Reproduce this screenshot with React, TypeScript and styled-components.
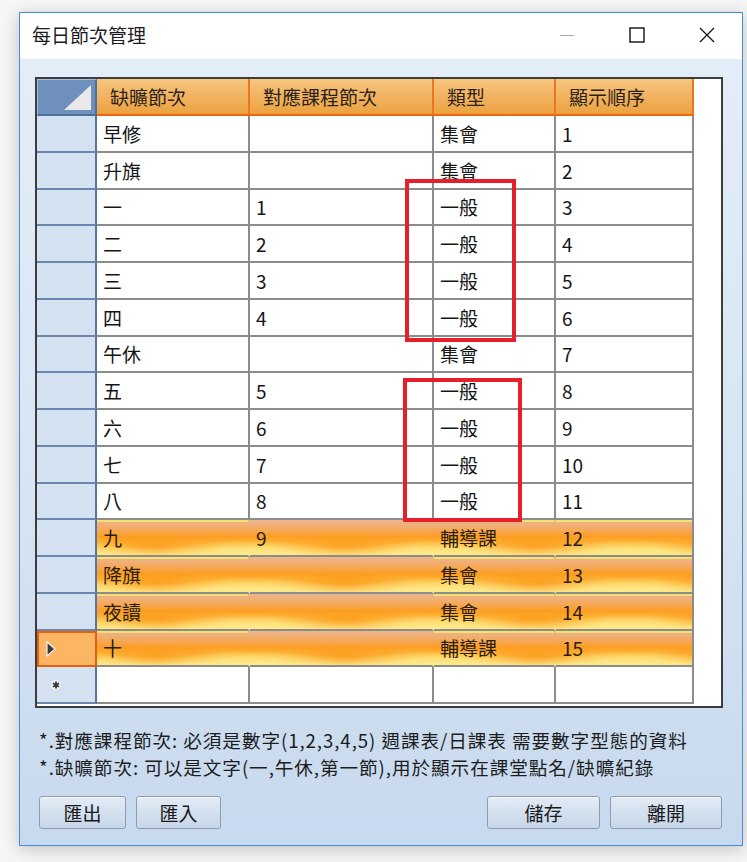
import styled, { createGlobalStyle, css } from 'styled-components'

const GlobalStyle = createGlobalStyle`
  html, body {
    margin: 0;
    padding: 0;
    background: #f6f6f6;
  }
  body {
    font-family: "Noto Sans CJK TC", "Noto Sans", sans-serif;
    color: #1a1a1a;
  }
`

const COLS = '60px 153px 184px 122px 138px'

const Page = styled.div`
  position: relative;
  width: 747px;
  height: 862px;
  padding: 12px 0 0 19px;
  box-sizing: border-box;
`

const Window = styled.div`
  width: 724px;
  height: 834px;
  box-sizing: border-box;
  border: 1px solid #3f8ddb;
  background: #fff;
  box-shadow: 0 3px 16px rgba(0, 0, 0, 0.22);
  display: flex;
  flex-direction: column;
`

const TitleBar = styled.div`
  flex-shrink: 0;
  height: 46px;
  display: flex;
  align-items: center;
  padding: 0 0 3px 12px;
  box-sizing: border-box;
  background: #fff;
`

const Title = styled.div`
  font-size: 19px;
  color: #1b1b1b;
  flex: 1;
`

const CaptionButton = styled.div`
  width: 70px;
  height: 40px;
  display: flex;
  align-items: center;
  justify-content: center;
`

const Client = styled.div`
  flex: 1;
  display: flex;
  flex-direction: column;
  padding: 18px 19px 16px 15px;
  background: linear-gradient(to bottom, #e3edf8 0%, #d6e4f3 55%, #c7d9ee 100%);
`

const Grid = styled.div`
  border: 2px solid #3d3d3d;
  background: #fff;
  display: flex;
  flex-direction: column;
  padding-bottom: 2px;
`

const Row = styled.div<{ $hl?: boolean; $head?: boolean }>`
  display: grid;
  grid-template-columns: ${COLS};
  width: 657px;
  height: ${(p) => (p.$head ? '37px' : '36.75px')};
  ${(p) =>
    p.$hl &&
    css`
      background:
        radial-gradient(ellipse 50% 45% at 50% 100%, rgba(254, 236, 140, 1), rgba(254, 236, 140, 0)) 118px 0 / 190px 100% repeat-x,
        radial-gradient(ellipse 40% 30% at 50% 68%, rgba(252, 148, 18, 0.75), rgba(252, 148, 18, 0)) 23px 0 / 190px 100% repeat-x,
        linear-gradient(
          to bottom,
          #ecb58c 0%,
          #f1ae72 16%,
          #f8a446 34%,
          #fd9e22 46%,
          #fdb437 60%,
          #fdd468 78%,
          #fde78c 100%
        );
    `}
`

const RowHeader = styled.div<{ $current?: boolean }>`
  box-sizing: border-box;
  background: #d3e1f1;
  border-right: 2px solid #56769f;
  border-bottom: 2px solid #6a86ad;
  display: flex;
  align-items: center;
  padding-left: 9px;
  ${(p) =>
    p.$current &&
    css`
      background: #fcb663;
      border: 2px solid #e6600e;
      padding-left: 7px;
    `}
`

const Corner = styled.div`
  position: relative;
  box-sizing: border-box;
  background: #6f90bc;
  border: 1px solid #a7bedb;
  border-right: 2px solid #4f6f9a;
  border-bottom: 2px solid #4f6f9a;
  &::after {
    content: '';
    position: absolute;
    right: 4px;
    bottom: 4px;
    width: 27px;
    height: 25px;
    background: #e9e9ea;
    clip-path: polygon(100% 0, 100% 100%, 0 100%);
  }
`

const HeadCell = styled.div`
  box-sizing: border-box;
  background: linear-gradient(to bottom, #f6c67e 0%, #f2b463 45%, #eca23f 100%);
  border-right: 2px solid #ee7420;
  border-bottom: 2px solid #f2650f;
  padding-left: 13px;
  display: flex;
  align-items: center;
  font-size: 19px;
  color: #2a2218;
`

const Cell = styled.div<{ $hl?: boolean; $last?: boolean; $topLine?: boolean }>`
  box-sizing: border-box;
  border-right: 2px solid #8c8c8c;
  border-bottom: 2px solid #8c8c8c;
  padding-left: 6px;
  display: flex;
  align-items: center;
  font-size: 19px;
  color: #151515;
  white-space: nowrap;
  ${(p) =>
    p.$hl &&
    css`
      border-right-color: ${p.$last ? '#8c8c8c' : 'transparent'};
      color: #2a1d0c;
    `}
  ${(p) =>
    p.$topLine &&
    css`
      box-shadow: inset 0 2px 0 #f3e173;
    `}
`

const Notes = styled.div`
  margin-top: 18px;
  padding-left: 4px;
  font-size: 18.6px;
  line-height: 27px;
  color: #1d1d1d;
  letter-spacing: 0.95px;
  white-space: nowrap;
`

const ButtonRow = styled.div`
  margin-top: 16px;
  display: flex;
  gap: 10px;
  padding: 0 1px 0 4px;
`

const Spacer = styled.div`
  flex: 1;
`

const DialogButton = styled.div<{ $w: number }>`
  width: ${(p) => p.$w}px;
  height: 33px;
  box-sizing: border-box;
  border: 1px solid #8e9cb1;
  border-radius: 3px;
  background: linear-gradient(to bottom, #e4ecf6 0%, #d3e0ef 50%, #c8d7ea 100%);
  box-shadow: inset 0 1px 0 rgba(255, 255, 255, 0.7);
  display: flex;
  align-items: center;
  justify-content: center;
  font-size: 19px;
  color: #1a1a1a;
`

const Mark = styled.div<{ $x: number; $y: number; $w: number; $h: number }>`
  position: absolute;
  left: ${(p) => p.$x}px;
  top: ${(p) => p.$y}px;
  width: ${(p) => p.$w}px;
  height: ${(p) => p.$h}px;
  box-sizing: border-box;
  border: 4px solid #e5202b;
`

type Period = { name: string; course: string; kind: string; order: string; hl?: boolean; current?: boolean }

const periods: Period[] = [
  { name: '早修', course: '', kind: '集會', order: '1' },
  { name: '升旗', course: '', kind: '集會', order: '2' },
  { name: '一', course: '1', kind: '一般', order: '3' },
  { name: '二', course: '2', kind: '一般', order: '4' },
  { name: '三', course: '3', kind: '一般', order: '5' },
  { name: '四', course: '4', kind: '一般', order: '6' },
  { name: '午休', course: '', kind: '集會', order: '7' },
  { name: '五', course: '5', kind: '一般', order: '8' },
  { name: '六', course: '6', kind: '一般', order: '9' },
  { name: '七', course: '7', kind: '一般', order: '10' },
  { name: '八', course: '8', kind: '一般', order: '11' },
  { name: '九', course: '9', kind: '輔導課', order: '12', hl: true },
  { name: '降旗', course: '', kind: '集會', order: '13', hl: true },
  { name: '夜讀', course: '', kind: '集會', order: '14', hl: true },
  { name: '十', course: '', kind: '輔導課', order: '15', hl: true, current: true },
]

function CurrentArrow() {
  return (
    <svg width="10" height="16" viewBox="0 0 10 16">
      <polygon points="1,1 9,8 1,15" fill="#3a3a3a" stroke="#f4f4f4" strokeWidth="1.2" />
    </svg>
  )
}

function NewRowGlyph() {
  return (
    <svg width="12" height="12" viewBox="0 0 12 12" style={{ marginLeft: 4 }}>
      <circle cx="6" cy="6" r="5" fill="#f2f2f2" />
      <path d="M6 2.5v7M3 4.2l6 3.6M9 4.2l-6 3.6" stroke="#3a3a3a" strokeWidth="1.8" />
    </svg>
  )
}

export default function App() {
  return (
    <>
      <GlobalStyle />
      <Page>
        <Window>
          <TitleBar>
            <Title>每日節次管理</Title>
            <CaptionButton>
              <svg width="16" height="16" viewBox="0 0 16 16">
                <line x1="1" y1="8.5" x2="15" y2="8.5" stroke="#a9a9a9" strokeWidth="1" />
              </svg>
            </CaptionButton>
            <CaptionButton>
              <svg width="16" height="16" viewBox="0 0 16 16">
                <rect x="1" y="1" width="14" height="14" fill="none" stroke="#111" strokeWidth="1.4" />
              </svg>
            </CaptionButton>
            <CaptionButton>
              <svg width="16" height="16" viewBox="0 0 16 16">
                <path d="M1 1L15 15M15 1L1 15" stroke="#111" strokeWidth="1.3" />
              </svg>
            </CaptionButton>
          </TitleBar>
          <Client>
            <Grid>
              <Row $head>
                <Corner />
                <HeadCell>缺曠節次</HeadCell>
                <HeadCell>對應課程節次</HeadCell>
                <HeadCell>類型</HeadCell>
                <HeadCell>顯示順序</HeadCell>
              </Row>
              {periods.map((p) => (
                <Row key={p.order} $hl={p.hl}>
                  <RowHeader $current={p.current}>{p.current && <CurrentArrow />}</RowHeader>
                  <Cell $hl={p.hl} $topLine={p.hl}>{p.name}</Cell>
                  <Cell $hl={p.hl}>{p.course}</Cell>
                  <Cell $hl={p.hl} $topLine={p.hl}>{p.kind}</Cell>
                  <Cell $hl={p.hl} $topLine={p.hl} $last>{p.order}</Cell>
                </Row>
              ))}
              <Row>
                <RowHeader>
                  <NewRowGlyph />
                </RowHeader>
                <Cell />
                <Cell />
                <Cell />
                <Cell />
              </Row>
            </Grid>
            <Notes>
              <div>*.對應課程節次: 必須是數字(1,2,3,4,5) 週課表/日課表 需要數字型態的資料</div>
              <div>*.缺曠節次: 可以是文字(一,午休,第一節),用於顯示在課堂點名/缺曠紀錄</div>
            </Notes>
            <ButtonRow>
              <DialogButton $w={87}>匯出</DialogButton>
              <DialogButton $w={85}>匯入</DialogButton>
              <Spacer />
              <DialogButton $w={113}>儲存</DialogButton>
              <DialogButton $w={112}>離開</DialogButton>
            </ButtonRow>
          </Client>
        </Window>
        <Mark $x={405} $y={179} $w={111} $h={163} />
        <Mark $x={403} $y={378} $w={119} $h={144} />
      </Page>
    </>
  )
}
